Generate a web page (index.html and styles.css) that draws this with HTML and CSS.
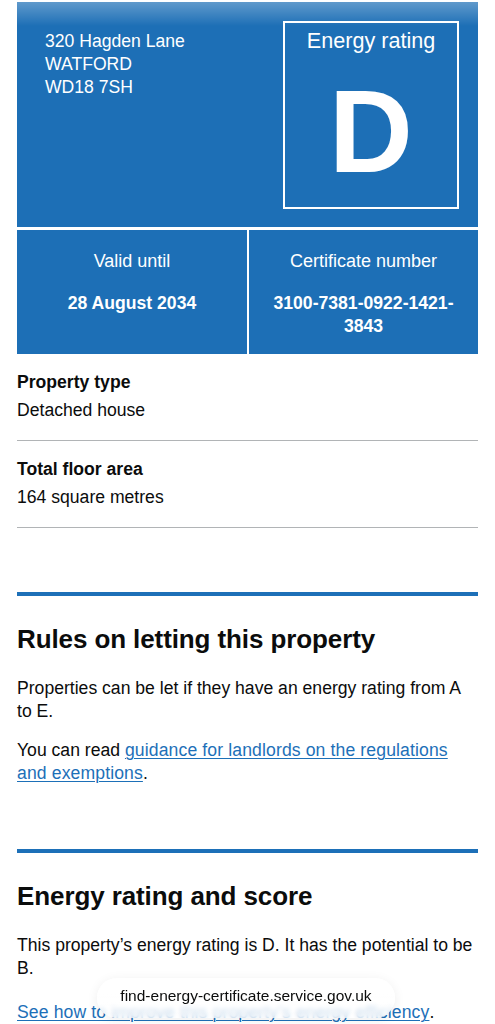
FILE: index.html
```html
<!DOCTYPE html>
<html lang="en">
<head>
<meta charset="utf-8">
<meta name="viewport" content="width=device-width, initial-scale=1">
<title>Energy performance certificate – 320 Hagden Lane</title>
<link rel="stylesheet" href="styles.css">
</head>
<body>
<main class="page">
  <section class="epc-header">
    <div class="epc-top">
      <p class="address">320 Hagden Lane<br>WATFORD<br>WD18 7SH</p>
      <div class="rating-box">
        <p class="rating-label">Energy rating</p>
        <p class="rating-letter">D</p>
      </div>
    </div>
    <div class="epc-cells">
      <div class="cell">
        <p class="cell-label">Valid until</p>
        <p class="cell-value">28 August 2034</p>
      </div>
      <div class="cell">
        <p class="cell-label">Certificate number</p>
        <p class="cell-value">3100-7381-0922-1421-3843</p>
      </div>
    </div>
  </section>

  <dl class="summary">
    <div class="summary-row">
      <dt class="summary-key">Property type</dt>
      <dd class="summary-value">Detached house</dd>
    </div>
    <div class="summary-row">
      <dt class="summary-key">Total floor area</dt>
      <dd class="summary-value">164 square metres</dd>
    </div>
  </dl>

  <section class="section">
    <h2 class="heading">Rules on letting this property</h2>
    <p class="body">Properties can be let if they have an energy rating from A to E.</p>
    <p class="body">You can read <a class="link" href="#">guidance for landlords on the regulations and exemptions</a>.</p>
  </section>

  <section class="section">
    <h2 class="heading">Energy rating and score</h2>
    <p class="body">This property’s energy rating is D. It has the potential to be B.</p>
    <p class="body improve"><a class="link" href="#">See how to improve this property’s energy efficiency</a>.</p>
  </section>
</main>

<div class="status-fade"></div>
<div class="url-pill">find-energy-certificate.service.gov.uk</div>
</body>
</html>
```

FILE: styles.css
```css
* {
  box-sizing: border-box;
}

html,
body {
  margin: 0;
  padding: 0;
  background: #ffffff;
}

body {
  font-family: "Liberation Sans", Arial, sans-serif;
  color: #0b0c0c;
  font-size: 17.6px;
  line-height: 23px;
  height: 1024px;
  overflow: hidden;
  position: relative;
}

p,
h2,
dl,
dt,
dd {
  margin: 0;
}

.page {
  padding: 2px 17px 0;
}

/* Blue certificate header */
.epc-header {
  display: grid;
  row-gap: 3px;
}

.epc-top {
  background: #1d6fb6;
  color: #ffffff;
  height: 225px;
  display: flex;
  justify-content: space-between;
  align-items: flex-start;
  padding: 19px 19px 18px 28px;
}

.address {
  margin-top: 8.5px;
  font-size: 17.6px;
  line-height: 23px;
}

.rating-box {
  width: 176px;
  height: 188px;
  border: 2px solid #ffffff;
  display: flex;
  flex-direction: column;
  align-items: center;
  padding-top: 5px;
}

.rating-label {
  font-size: 21.6px;
  line-height: 25px;
}

.rating-letter {
  margin-top: 21px;
  font-size: 116px;
  line-height: 116px;
  font-weight: 700;
}

.epc-cells {
  display: grid;
  grid-template-columns: 230px 1fr;
  column-gap: 2px;
}

.cell {
  background: #1d6fb6;
  color: #ffffff;
  text-align: center;
  padding: 20px 19px 16px;
}

.cell-label {
  font-size: 18px;
  line-height: 23px;
  margin-bottom: 19px;
}

.cell-value {
  font-weight: 700;
  font-size: 17.6px;
  line-height: 23px;
}

/* Property summary list */
.summary {
  margin-bottom: 64px;
}

.summary-row {
  padding: 17px 0 18px;
  border-bottom: 1px solid #b1b4b6;
}

.summary-key {
  font-weight: 700;
  margin-bottom: 5px;
}

.summary-value {
  margin: 0;
}

.summary-row + .summary-row .summary-value {
  margin-top: 1px;
}

/* Content sections: the last paragraph's margin collapses into this one */
.section {
  border-top: 4px solid #1d70b8;
  padding-top: 29px;
  margin-bottom: 64px;
}

.heading {
  font-size: 26px;
  line-height: 29px;
  font-weight: 700;
  letter-spacing: -0.1px;
  margin-bottom: 23px;
}

.body {
  margin-bottom: 16px;
}

.body.improve {
  margin-top: 21px;
}

.link {
  color: #1d70b8;
  letter-spacing: 0.12px;
  text-decoration: underline;
  text-decoration-thickness: 1px;
  text-underline-offset: 2px;
}

/* Browser chrome overlays */
.status-fade {
  position: absolute;
  top: 0;
  left: 0;
  right: 0;
  height: 26px;
  background: linear-gradient(to bottom, rgba(255, 255, 255, 0.32), rgba(255, 255, 255, 0));
  pointer-events: none;
}

.url-pill {
  position: absolute;
  top: 978px;
  left: 97px;
  width: 298px;
  height: 40px;
  border-radius: 20px;
  background: linear-gradient(to bottom, rgba(255, 255, 255, 0.92) 40%, rgba(255, 255, 255, 0.72));
  backdrop-filter: blur(2px);
  box-shadow: 0 2px 12px rgba(0, 0, 0, 0.07);
  display: flex;
  justify-content: center;
  padding-top: 8px;
  font-family: "Liberation Sans", Arial, sans-serif;
  font-size: 15.5px;
  line-height: 20px;
  color: #0b0c0c;
}
```
